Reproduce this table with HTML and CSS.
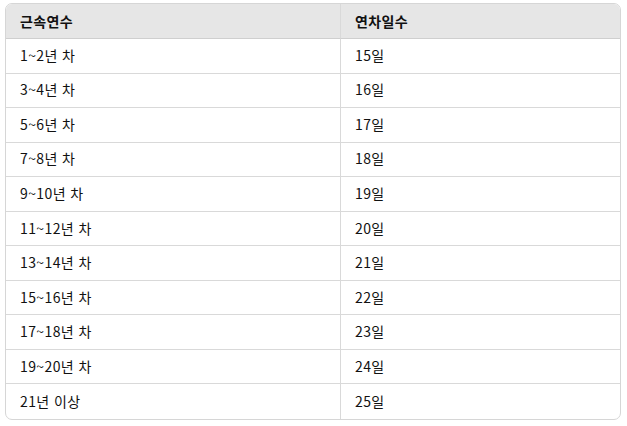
FILE: index.html
```html
<!DOCTYPE html>
<html lang="ko">
<head>
<meta charset="utf-8">
<link rel="stylesheet" href="styles.css">
</head>
<body>
<div class="wrap">
<table class="leave">
<thead>
<tr class="head"><th class="c1">근속연수</th><th>연차일수</th></tr>
</thead>
<tbody>
<tr><td class="c1">1~2년 차</td><td>15일</td></tr>
<tr><td class="c1">3~4년 차</td><td>16일</td></tr>
<tr><td class="c1">5~6년 차</td><td>17일</td></tr>
<tr><td class="c1">7~8년 차</td><td>18일</td></tr>
<tr><td class="c1">9~10년 차</td><td>19일</td></tr>
<tr><td class="c1">11~12년 차</td><td>20일</td></tr>
<tr><td class="c1">13~14년 차</td><td>21일</td></tr>
<tr><td class="c1">15~16년 차</td><td>22일</td></tr>
<tr><td class="c1">17~18년 차</td><td>23일</td></tr>
<tr><td class="c1">19~20년 차</td><td>24일</td></tr>
<tr><td class="c1">21년 이상</td><td>25일</td></tr>
</tbody>
</table>
</div>
</body>
</html>
```
FILE: styles.css
```css
html, body {
  margin: 0;
  padding: 0;
  background: #ffffff;
}
.wrap {
  padding: 3px 6px 0 5px;
}
.leave {
  width: 616px;
  border-collapse: separate;
  border-spacing: 0;
  border: 1px solid #d6d6d6;
  border-radius: 7px;
  overflow: hidden;
  table-layout: fixed;
  font-family: "Noto Sans CJK KR", "Noto Sans", sans-serif;
  font-size: 14px;
  letter-spacing: 0.4px;
  color: #111;
}
.leave tr {
  height: 34.55px;
}
.leave tr.head {
  height: 35px;
}
.leave th, .leave td {
  text-align: left;
  padding: 0 0 2px 14px;
  border-bottom: 1px solid #d9d9d9;
  vertical-align: middle;
  line-height: 1;
}
.leave th {
  background: #e6e6e6;
  font-weight: bold;
  color: #111;
  border-bottom-color: #cfcfcf;
  padding-bottom: 1px;
}
.leave tbody tr:last-child td {
  border-bottom: none;
}
.leave .c1 {
  width: 320px;
  border-right: 1px solid #d9d9d9;
}
```
